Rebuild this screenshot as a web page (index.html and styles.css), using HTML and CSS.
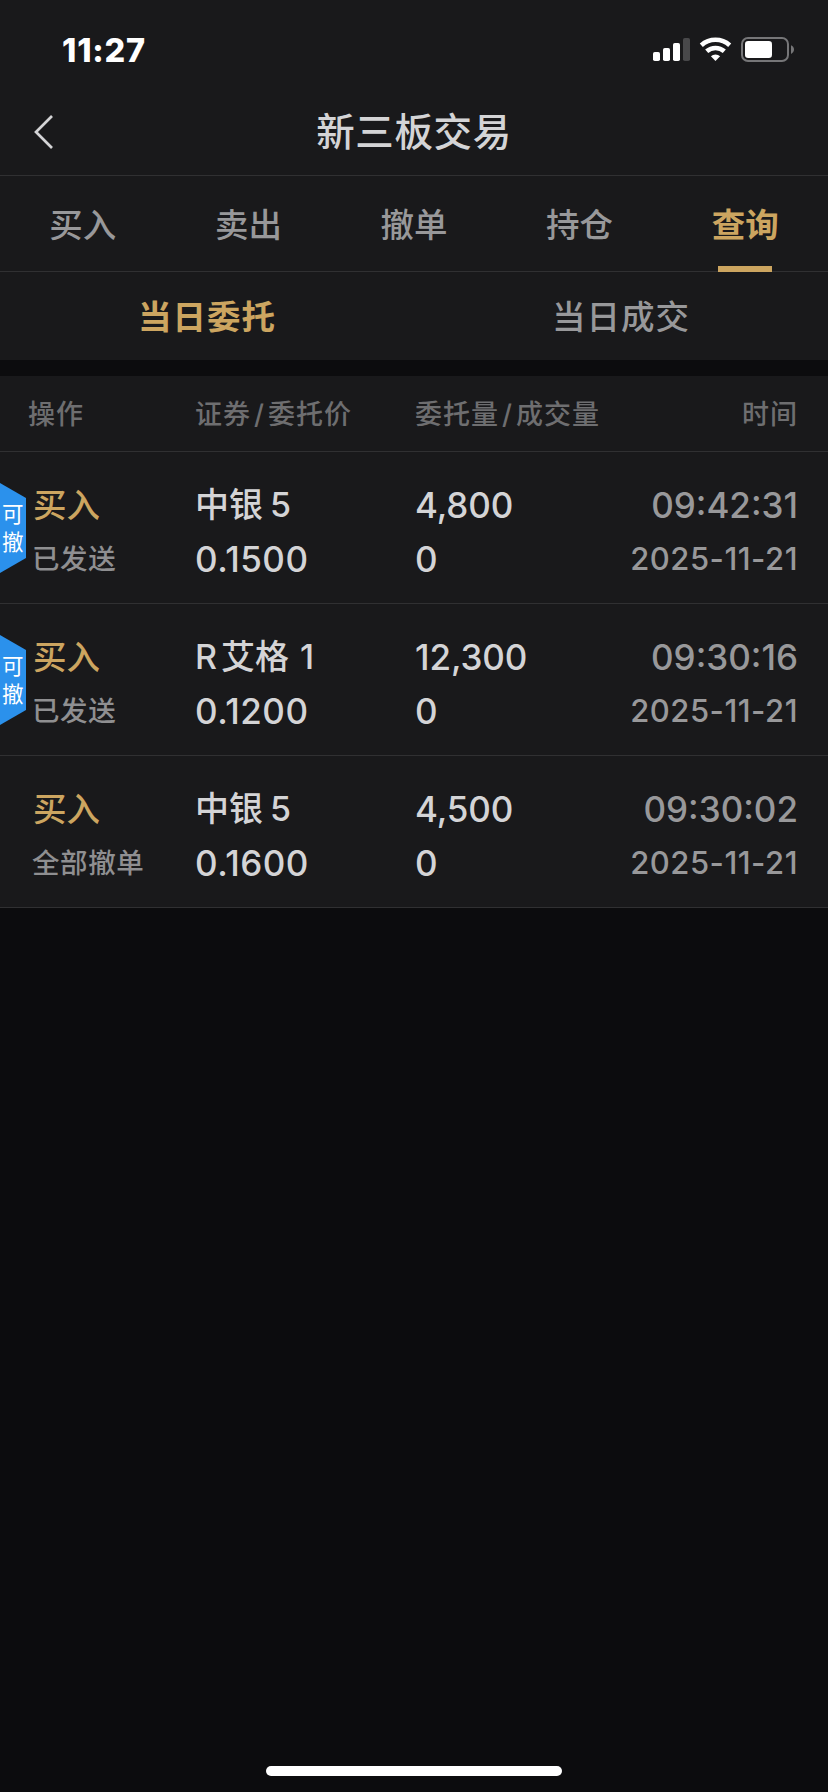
FILE: index.html
```html
<!DOCTYPE html>
<html lang="zh-CN">
<head>
<meta charset="utf-8">
<title>新三板交易</title>
<link rel="stylesheet" href="styles.css">
</head>
<body>
<div class="screen">
  <div class="statusbar">
    <span class="clock">11:27</span>
    <svg class="status-icons" width="144" height="28" viewBox="0 0 144 28">
      <g fill="#fff">
        <rect x="1" y="16" width="7" height="9" rx="1.8"/>
        <rect x="11" y="12" width="7" height="13" rx="1.8"/>
        <rect x="21" y="7" width="7" height="18" rx="1.8"/>
        <rect x="31" y="2" width="7" height="23" rx="1.8" fill="#48484a"/>
      </g>
      <g fill="none" stroke="#fff" stroke-width="4.6">
        <path d="M49.3 9.2a21.4 21.4 0 0 1 28.4 0"/>
        <path d="M54.7 15.3a13.2 13.2 0 0 1 17.6 0"/>
      </g>
      <path d="M63.5 25l-4.6-4.7a6.6 6.6 0 0 1 9.2 0z" fill="#fff"/>
      <rect x="90" y="2" width="46" height="23" rx="6" fill="none" stroke="#767678" stroke-width="2"/>
      <rect x="93" y="5" width="27" height="17" rx="3.2" fill="#fff"/>
      <path d="M139 9.3c4 1.600 4 7 0 8.600z" fill="#767678"/>
    </svg>
  </div>
  <header class="navbar">
    <svg class="back" width="20" height="37" viewBox="0 0 20 37"><path d="M18 2L2 18 18 34" fill="none" stroke="#d4d4d6" stroke-width="2.700"/></svg>
    <h1 class="title">新三板交易</h1>
  </header>
  <nav class="tabs">
    <span class="tab">买入</span>
    <span class="tab">卖出</span>
    <span class="tab">撤单</span>
    <span class="tab">持仓</span>
    <span class="tab tab-active">查询</span>
  </nav>
  <div class="subtabs">
    <span class="subtab subtab-active">当日委托</span>
    <span class="subtab">当日成交</span>
  </div>
  <div class="row table-head">
    <span class="head-action">操作</span>
    <span>证券<i class="slash">/</i>委托价</span>
    <span>委托量<i class="slash">/</i>成交量</span>
    <span class="end">时间</span>
  </div>
  <div class="row order">
    <div class="badge"><span>可</span><span>撤</span></div>
    <div class="cell"><span class="side">买入</span><span class="state">已发送</span></div>
    <div class="cell"><span class="name">中银<i class="gap"></i>5</span><span class="num">0.1500</span></div>
    <div class="cell"><span class="num qty">4,800</span><span class="num qty">0</span></div>
    <div class="cell end"><span class="time">09:42:31</span><span class="date">2025-11-21</span></div>
  </div>
  <div class="row order">
    <div class="badge"><span>可</span><span>撤</span></div>
    <div class="cell"><span class="side">买入</span><span class="state">已发送</span></div>
    <div class="cell"><span class="name">R<i class="gap-s"></i>艾格<i class="gap-l"></i>1</span><span class="num">0.1200</span></div>
    <div class="cell"><span class="num qty">12,300</span><span class="num qty">0</span></div>
    <div class="cell end"><span class="time">09:30:16</span><span class="date">2025-11-21</span></div>
  </div>
  <div class="row order">
    <div class="cell"><span class="side">买入</span><span class="state">全部撤单</span></div>
    <div class="cell"><span class="name">中银<i class="gap"></i>5</span><span class="num">0.1600</span></div>
    <div class="cell"><span class="num qty">4,500</span><span class="num qty">0</span></div>
    <div class="cell end"><span class="time">09:30:02</span><span class="date">2025-11-21</span></div>
  </div>
  <div class="home-area"><div class="home-bar"></div></div>
</div>
</body>
</html>
```

FILE: styles.css
```css
* { box-sizing: border-box; }
body {
  margin: 0;
  background: #0c0c0e;
  font-family: Inter, "Noto Sans CJK SC", sans-serif;
  font-weight: 500;
  color: #d4d4d6;
}
i { font-style: normal; }
.screen {
  width: 828px;
  height: 1792px;
  display: flex;
  flex-direction: column;
  overflow: hidden;
}
.statusbar {
  height: 88px;
  flex: none;
  display: flex;
  justify-content: space-between;
  padding: 36px 32px 0 62px;
  background: #19191b;
}
.clock {
  font-size: 32.5px;
  line-height: 29px;
  font-weight: 800;
  letter-spacing: 0.8px;
  color: #fff;
}
.navbar {
  height: 88px;
  flex: none;
  display: grid;
  grid-template-columns: 1fr auto 1fr;
  align-items: center;
  padding: 1px 34px 0 34px;
  background: #19191b;
  border-bottom: 1px solid #303032;
}
.title {
  margin: 0;
  font-size: 38.5px;
  line-height: 57px;
  font-weight: 500;
  letter-spacing: 0.6px;
}
.tabs {
  height: 96px;
  flex: none;
  display: grid;
  grid-template-columns: repeat(5, 1fr);
  background: #19191b;
  border-bottom: 1px solid #303032;
}
.tab {
  position: relative;
  text-align: center;
  font-size: 33.5px;
  line-height: 98px;
  height: 95px;
  color: #98989a;
}
.tab-active { color: #cca560; font-weight: 700; }
.tab-active::after {
  content: "";
  position: absolute;
  left: 50%;
  bottom: -1px;
  width: 54px;
  height: 6px;
  margin-left: -27px;
  background: #cca560;
}
.subtabs {
  height: 88px;
  flex: none;
  display: grid;
  grid-template-columns: 1fr 1fr;
  background: #19191b;
  margin-bottom: 16px;
}
.subtab {
  height: 88px;
  text-align: center;
  font-size: 33.5px;
  line-height: 90px;
  letter-spacing: 1px;
  color: #98989a;
}
.subtab-active { color: #cca560; font-weight: 700; }
.row {
  position: relative;
  flex: none;
  display: grid;
  grid-template-columns: 162px 220px 195px 1fr;
  padding: 0 30px 0 33px;
  background: #19191b;
  border-bottom: 1px solid #303032;
}
.table-head {
  height: 76px;
  line-height: 78px;
  font-size: 27px;
  font-weight: 500;
  letter-spacing: 1px;
  white-space: nowrap;
  color: #6e6e70;
}
.head-action { margin-left: -5px; }
.slash { margin: 0 3px; }
.end { text-align: right; }
.order { height: 152px; padding-top: 26px; }
.cell { display: flex; flex-direction: column; line-height: 54px; white-space: nowrap; }
.side { font-size: 33.5px; color: #cca560; }
.state { margin-left: -1px; font-size: 27.5px; letter-spacing: 0.6px; color: #8f8f91; }
.num { font-size: 35px; letter-spacing: 0.5px; }
.qty { letter-spacing: -0.1px; }
.name { font-size: 34px; line-height: 53px; padding-bottom: 1px; }
.time { font-size: 35px; color: #98989a; }
.date { font-size: 31px; letter-spacing: 0.5px; color: #98989a; }
.gap { margin-left: 7px; }
.gap-s { margin-left: 4px; }
.gap-l { margin-left: 11px; }
.badge {
  position: absolute;
  left: 0;
  top: 31px;
  width: 26px;
  height: 90px;
  padding: 17px 0 0 2px;
  display: flex;
  flex-direction: column;
  font-size: 21.5px;
  line-height: 28px;
  font-weight: 400;
  color: #fff;
  background: #2b91ec;
  clip-path: polygon(0 0, 100% 16.700%, 100% 83.300%, 0 100%);
}
.home-area {
  flex: 1;
  display: flex;
  justify-content: center;
  align-items: flex-end;
  padding-bottom: 16px;
}
.home-bar { width: 296px; height: 10px; border-radius: 5px; background: #fff; }
```
